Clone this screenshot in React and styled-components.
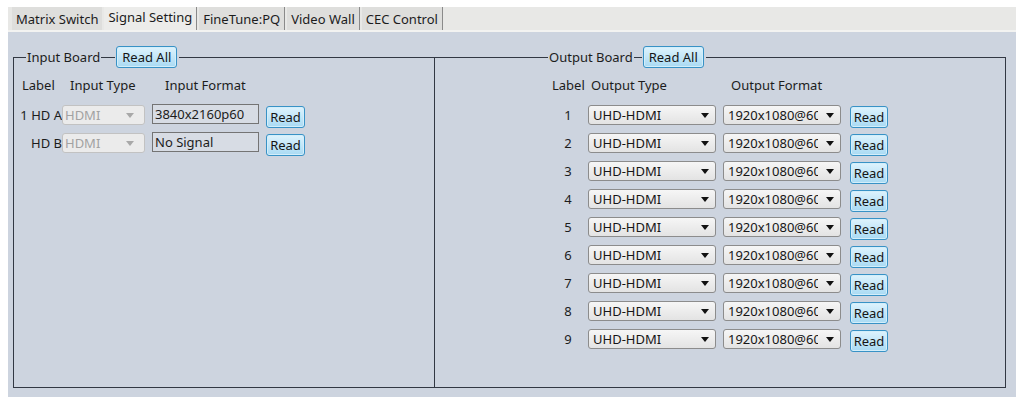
import React from 'react';
import styled, { createGlobalStyle, css } from 'styled-components';

const GlobalStyle = createGlobalStyle`
  body {
    margin: 0;
    background: #ffffff;
    font-family: "Noto Sans", "Open Sans", sans-serif;
    font-size: 13px;
    color: #1c1c1c;
  }
`;

const Page = styled.div`
  padding: 7px 8px 0 8px;
  width: 1008px;
`;

const TabStrip = styled.div`
  display: flex;
  height: 23px;
  background: #e8e8e6;
  padding-left: 4px;
  gap: 2px;
`;

const Tab = styled.div`
  display: flex;
  align-items: center;
  padding: 0 4px;
  white-space: nowrap;
  background: #dededc;
  ${(p) => p.$divider && css`border-right: 1px solid #8a8a8a;`}
  ${(p) => p.$active && css`
    align-items: flex-start;
    padding-top: 1px;
    background: #ececea;
  `}
`;

const StripEdge = styled.div`
  height: 2px;
  background: #f3f3f1;
`;

const Panel = styled.div`
  background: #cdd4df;
  height: 365px;
  box-sizing: border-box;
  padding: 14px 10px 9px 5px;
`;

const Groups = styled.div`
  display: flex;
  height: 100%;
`;

const Group = styled.fieldset`
  margin: 0;
  padding: 0;
  min-width: 0;
  border: 1px solid #323843;
  box-sizing: border-box;
  ${(p) => p.$wide ? css`flex: 1; border-left: none;` : css`width: 422px;`}
`;

const Legend = styled.legend`
  display: flex;
  align-items: center;
  padding: 0 2px 0 1px;
  margin-left: ${(p) => p.$offset}px;
`;

const Dash = styled.span`
  width: ${(p) => p.$w}px;
  border-top: 1px solid #323843;
  margin: 0 1px;
`;

const ReadButton = styled.button`
  font: inherit;
  color: #151515;
  height: 22px;
  padding: 0 ${(p) => (p.$row ? 4 : 5)}px;
  border: 1px solid #3892c6;
  border-radius: 3px;
  background: linear-gradient(#def3fd, #a9daf3);
  box-shadow: inset 0 0 0 1px #d3eefa;
  display: flex;
  align-items: center;
  justify-content: center;
  cursor: pointer;
  ${(p) => p.$row && css`margin: 1px 0 0 ${p.$ml}px;`}
`;

const Body = styled.div`
  padding: 8px 0 0 ${(p) => p.$indent}px;
`;

const Row = styled.div`
  display: grid;
  grid-template-columns: ${(p) => p.$cols};
  align-items: start;
  height: 22px;
  margin-bottom: 6px;
`;

const HeaderRow = styled(Row)`
  height: 18px;
  margin-bottom: 11px;
  align-items: center;
`;

const HeaderCell = styled.div`
  padding-left: ${(p) => p.$indent}px;
  white-space: nowrap;
`;

const LabelCell = styled.div`
  display: flex;
  height: 20px;
  align-items: center;
  white-space: nowrap;
  justify-content: ${(p) => (p.$center ? 'center' : 'flex-end')};
`;

const Dropdown = styled.div`
  display: flex;
  align-items: center;
  height: 20px;
  box-sizing: border-box;
  margin-left: ${(p) => p.$ml}px;
  padding: 0 6px 0 4px;
  border-radius: 3px;
  white-space: nowrap;
  overflow: hidden;
  ${(p) => p.$disabled ? css`
    border: 1px solid #c2c2c2;
    background: #ebebeb;
    color: #a2a2a2;
    padding-left: 2px;
  ` : css`
    border: 1px solid #8c8c8c;
    background: linear-gradient(#f6f6f6, #e3e3e3);
    color: #161616;
  `}
`;

const DropText = styled.span`
  flex: 1;
  overflow: hidden;
`;

const Arrow = styled.span`
  flex: none;
  margin-left: 8px;
  width: 0;
  height: 0;
  border-left: ${(p) => (p.$disabled ? 4 : 4.5)}px solid transparent;
  border-right: ${(p) => (p.$disabled ? 4 : 4.5)}px solid transparent;
  border-top: 5px solid ${(p) => (p.$disabled ? '#a8a8a8' : '#111')};
  margin-right: ${(p) => (p.$disabled ? 4 : 0)}px;
`;

const FormatBox = styled.div`
  height: 20px;
  margin: -1px 0 0 7px;
  box-sizing: border-box;
  border: 1px solid #747474;
  background: #d7dce4;
  padding-left: 2px;
  display: flex;
  align-items: center;
`;

const Select = ({ value, disabled, ml = 0 }) => (
  <Dropdown $disabled={disabled} $ml={ml}>
    <DropText>{value}</DropText>
    <Arrow $disabled={disabled} />
  </Dropdown>
);

const inputs = [
  { label: '1 HD A', format: '3840x2160p60' },
  { label: 'HD B', format: 'No Signal' },
];

const outputs = [1, 2, 3, 4, 5, 6, 7, 8, 9];

// column widths include the gap in front of each cell
const inCols = '48px 83px 114px 46px';
const outCols = '40px 128px 125px 47px';

export default function App() {
  return (
    <>
      <GlobalStyle />
      <Page>
        <TabStrip>
          <Tab>Matrix Switch</Tab>
          <Tab $active $divider>Signal Setting</Tab>
          <Tab $divider>FineTune:PQ</Tab>
          <Tab $divider>Video Wall</Tab>
          <Tab $divider>CEC Control</Tab>
        </TabStrip>
        <StripEdge />
        <Panel>
          <Groups>
            <Group>
              <Legend $offset={12}>
                Input Board
                <Dash $w={14} />
                <ReadButton>Read All</ReadButton>
              </Legend>
              <Body $indent={0}>
                <HeaderRow $cols={inCols}>
                  <HeaderCell $indent={8}>Label</HeaderCell>
                  <HeaderCell $indent={8}>Input Type</HeaderCell>
                  <HeaderCell $indent={20}>Input Format</HeaderCell>
                </HeaderRow>
                {inputs.map((item) => (
                  <Row key={item.label} $cols={inCols}>
                    <LabelCell>{item.label}</LabelCell>
                    <Select value="HDMI" disabled />
                    <FormatBox>{item.format}</FormatBox>
                    <ReadButton $row $ml={7}>Read</ReadButton>
                  </Row>
                ))}
              </Body>
            </Group>
            <Group $wide>
              <Legend $offset={113}>
                Output Board
                <Dash $w={8} />
                <ReadButton>Read All</ReadButton>
              </Legend>
              <Body $indent={113}>
                <HeaderRow $cols={outCols}>
                  <HeaderCell $indent={4}>Label</HeaderCell>
                  <HeaderCell $indent={3}>Output Type</HeaderCell>
                  <HeaderCell $indent={15}>Output Format</HeaderCell>
                </HeaderRow>
                {outputs.map((n) => (
                  <Row key={n} $cols={outCols}>
                    <LabelCell $center>{n}</LabelCell>
                    <Select value="UHD-HDMI" />
                    <Select value="1920x1080@60" ml={7} />
                    <ReadButton $row $ml={9}>Read</ReadButton>
                  </Row>
                ))}
              </Body>
            </Group>
          </Groups>
        </Panel>
      </Page>
    </>
  );
}
